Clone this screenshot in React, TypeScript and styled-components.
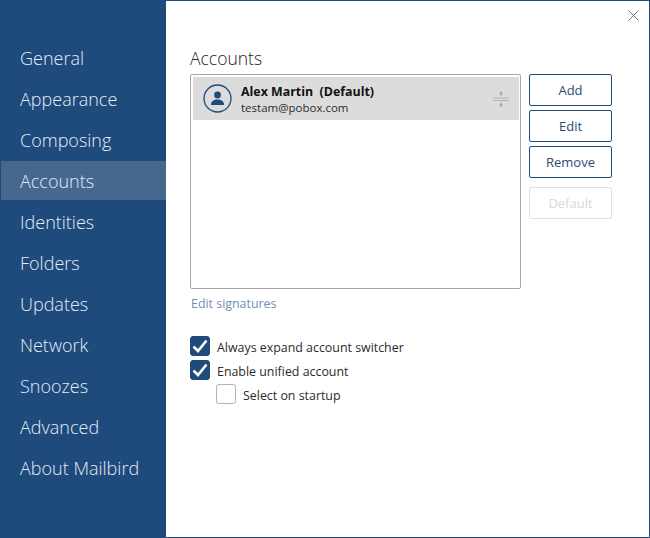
import React from "react";
import styled, { createGlobalStyle } from "styled-components";

const navItems = [
  "General",
  "Appearance",
  "Composing",
  "Accounts",
  "Identities",
  "Folders",
  "Updates",
  "Network",
  "Snoozes",
  "Advanced",
  "About Mailbird",
];

const GlobalStyle = createGlobalStyle`
  html, body {
    margin: 0;
    padding: 0;
    background: #fff;
  }
  * {
    box-sizing: border-box;
  }
`;

const Window = styled.div`
  width: 650px;
  height: 538px;
  display: flex;
  border: 1px solid #1f4a7c;
  border-left: 0;
  background: #fff;
  font-family: "Open Sans", "Noto Sans", sans-serif;
  overflow: hidden;
`;

const Sidebar = styled.nav`
  width: 166px;
  flex-shrink: 0;
  background: #1f4a7c;
  padding: 37px 0 0 1px;
  display: flex;
  flex-direction: column;
  gap: 2px;
`;

const NavItem = styled.div<{ $active?: boolean }>`
  height: 39px;
  line-height: 41px;
  padding-left: 19px;
  font-size: 18px;
  font-weight: 300;
  color: #e4edf7;
  background: ${(p) => (p.$active ? "#46688f" : "transparent")};
`;

const Content = styled.main`
  flex: 1;
  display: flex;
  flex-direction: column;
  padding: 0 37px 0 24px;
`;

const CloseRow = styled.div`
  height: 19px;
  margin-right: -27px;
  padding-top: 9px;
  display: flex;
  justify-content: flex-end;
`;

const Title = styled.h1`
  margin: 25px 0 0;
  height: 29px;
  line-height: 26px;
  font-size: 17.5px;
  font-weight: 300;
  color: #222;
`;

const AccountsRow = styled.div`
  display: flex;
  gap: 8px;
`;

const ListBox = styled.div`
  width: 331px;
  height: 215px;
  border: 1px solid #a6a6a6;
  border-radius: 2px;
  padding: 2px 1px 0 2px;
`;

const AccountRow = styled.div`
  height: 43px;
  background: #dcdcdc;
  display: flex;
  align-items: center;
  padding: 0 9px 0 10px;
`;

const Avatar = styled.svg`
  width: 29px;
  height: 29px;
  flex-shrink: 0;
  margin-right: 9px;
`;

const AccountText = styled.div`
  flex: 1;
  display: flex;
  flex-direction: column;
`;

const AccountName = styled.div`
  font-size: 12.4px;
  line-height: 17px;
  font-weight: 700;
  color: #111;
  white-space: pre;
`;

const AccountEmail = styled.div`
  font-size: 11.5px;
  line-height: 15px;
  color: #2b2b2b;
`;

const DragHandle = styled.svg`
  width: 18px;
  height: 20px;
  flex-shrink: 0;
`;

const ButtonColumn = styled.div`
  display: flex;
  flex-direction: column;
  gap: 4px;
`;

const ActionButton = styled.button<{ $disabled?: boolean }>`
  width: 83px;
  height: 32px;
  padding: 0;
  border-radius: 2px;
  background: #fff;
  font-family: inherit;
  font-size: 13px;
  border: 1px solid ${(p) => (p.$disabled ? "#dde1e6" : "#1f4a7c")};
  color: ${(p) => (p.$disabled ? "#d5dbe3" : "#2c4a72")};
  margin-top: ${(p) => (p.$disabled ? "5px" : "0")};
`;

const SignatureLink = styled.a`
  display: block;
  margin: 6px 0 0 1px;
  height: 18px;
  line-height: 18px;
  font-size: 12.4px;
  color: #6f8fb5;
`;

const Options = styled.div`
  margin-top: 23px;
  display: flex;
  flex-direction: column;
  gap: 4px;
`;

const Option = styled.label<{ $nested?: boolean }>`
  display: flex;
  align-items: center;
  gap: 7px;
  height: 20px;
  margin-left: ${(p) => (p.$nested ? "26px" : "0")};
  font-size: 12.4px;
  color: #2b2b2b;
`;

const OptionText = styled.span`
  padding-top: 2px;
`;

const CheckBox = styled.span<{ $checked?: boolean }>`
  width: 20px;
  height: 20px;
  border-radius: 3px;
  display: flex;
  align-items: center;
  justify-content: center;
  background: ${(p) => (p.$checked ? "#1f4a7c" : "#fff")};
  border: 1px solid ${(p) => (p.$checked ? "#1f4a7c" : "#b4b4b4")};
`;

function Check() {
  return (
    <svg width="16" height="14" viewBox="0 0 16 14" fill="none">
      <path d="M1.5 7.5 L6 12 L14.5 1.5" stroke="#fff" strokeWidth="2.6" />
    </svg>
  );
}

export default function App() {
  return (
    <Window>
      <GlobalStyle />
      <Sidebar>
        {navItems.map((item) => (
          <NavItem key={item} $active={item === "Accounts"}>
            {item}
          </NavItem>
        ))}
      </Sidebar>
      <Content>
        <CloseRow>
          <svg width="11" height="11" viewBox="0 0 11 11" fill="none">
            <path d="M0.5 0.5 L10.5 10.5 M10.5 0.5 L0.5 10.5" stroke="#666" strokeWidth="0.9" />
          </svg>
        </CloseRow>
        <Title>Accounts</Title>
        <AccountsRow>
          <ListBox>
            <AccountRow>
              <Avatar viewBox="0 0 29 29" fill="none">
                <circle cx="14.5" cy="14.5" r="13.5" stroke="#1f4a7c" strokeWidth="1.3" />
                <circle cx="14.5" cy="11" r="3.4" fill="#1f4a7c" />
                <path d="M8 21 C8 17 11 15.6 14.5 15.6 C18 15.6 21 17 21 21 Z" fill="#1f4a7c" />
              </Avatar>
              <AccountText>
                <AccountName>Alex Martin  (Default)</AccountName>
                <AccountEmail>testam@pobox.com</AccountEmail>
              </AccountText>
              <DragHandle viewBox="0 0 18 20" fill="none">
                <path d="M1 9 H17 M1 11.5 H17" stroke="#b5b5b5" strokeWidth="1" />
                <path d="M9 2 L7 5 H8.4 V7 H9.6 V5 H11 Z M9 18.5 L7 15.5 H8.4 V13.5 H9.6 V15.5 H11 Z" fill="#a8a8a8" />
              </DragHandle>
            </AccountRow>
          </ListBox>
          <ButtonColumn>
            <ActionButton>Add</ActionButton>
            <ActionButton>Edit</ActionButton>
            <ActionButton>Remove</ActionButton>
            <ActionButton $disabled>Default</ActionButton>
          </ButtonColumn>
        </AccountsRow>
        <SignatureLink>Edit signatures</SignatureLink>
        <Options>
          <Option>
            <CheckBox $checked>
              <Check />
            </CheckBox>
            <OptionText>Always expand account switcher</OptionText>
          </Option>
          <Option>
            <CheckBox $checked>
              <Check />
            </CheckBox>
            <OptionText>Enable unified account</OptionText>
          </Option>
          <Option $nested>
            <CheckBox />
            <OptionText>Select on startup</OptionText>
          </Option>
        </Options>
      </Content>
    </Window>
  );
}
